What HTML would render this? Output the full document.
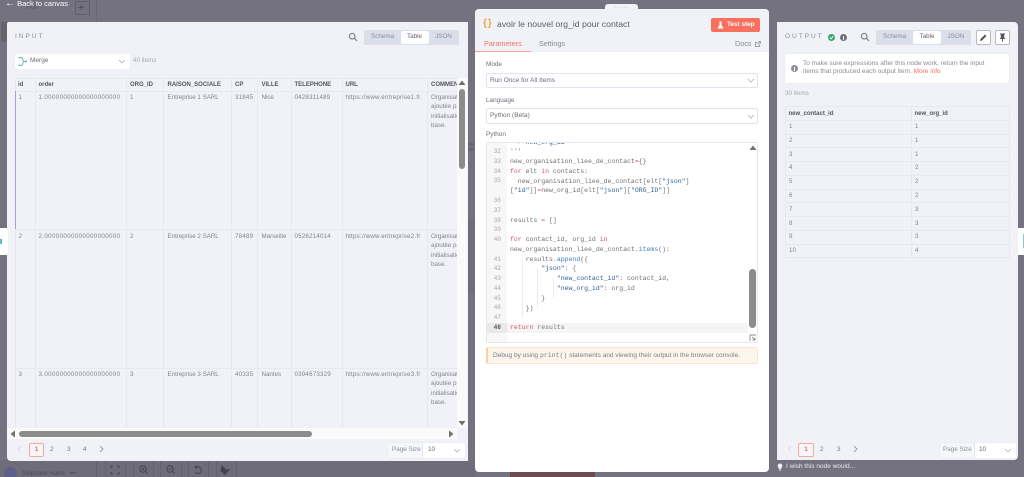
<!DOCTYPE html>
<html lang="fr"><head><meta charset="utf-8"><title>avoir le nouvel org_id pour contact</title>
<style>
*{box-sizing:border-box;margin:0;padding:0}
html,body{width:1024px;height:477px;overflow:hidden;background:#74727f}
body{position:relative;font-family:"Liberation Sans",sans-serif;color:#7b7b85;font-size:6.2px;filter:blur(.35px)}
div,span.a,svg.a{position:absolute}
.t{white-space:nowrap;line-height:10px}
.panel{background:#f0f2f8}
.hd{font-weight:bold;color:#555560;font-size:6px}
.c{color:#84848d;font-size:6.2px}
.d{letter-spacing:.36px}
.e{letter-spacing:.2px}
.m{line-height:9.4px}
.vl{width:1px;background:#e7e9f1}
.hl{height:1px;background:#e7e9f1}
.seg{background:#dbdfe9;border-radius:2px}
.sel{background:#fff;border:1px solid #e2e4ed;border-radius:2px}
.code{font-family:"Liberation Mono",monospace;font-size:6.5px;line-height:9.76px;white-space:pre;color:#6f6f78}
.k{color:#d9536a}.s{color:#2f5f96}.f{color:#3c7fc4}.o{color:#d9536a}
.n{font-family:"Liberation Mono",monospace;font-size:6.2px;color:#a8a8ae;text-align:right;width:12px;line-height:10px}
.btn{top:460px;height:17px;border:1px solid #64626e;border-bottom:none}
</style></head><body>

<!-- dim canvas -->
<div style="left:96px;top:0;width:1px;height:22px;background:#6b6975"></div>
<div class="t" style="left:26px;top:3px;color:#5c5a66;font-size:7px">Nori</div>
<div class="t" style="left:5px;top:-1px;color:#fff;font-size:7.500px;line-height:10px"><span style="font-size:10px;font-weight:bold">&#8592;</span> Back to canvas</div>
<div style="left:75px;top:1px;width:15px;height:14px;border:1px solid #605e6a;border-radius:2px"></div>
<div class="t" style="left:78px;top:2px;color:#4a4854;font-size:11px;line-height:12px">+</div>
<div style="left:1px;top:22px;width:6px;height:20px;background:#66646f"></div>

<!-- bottom bar -->
<div style="left:0;top:460px;width:475px;height:17px;background:#6e6c79"></div>
<div style="left:4px;top:467px;width:13px;height:13px;border-radius:50%;background:#5d5f86"></div>
<div class="t" style="left:22px;top:469px;font-size:6px;color:#4b4a55">Stéphane Hakni &nbsp; •••</div>
<div class="vl" style="left:96px;top:460px;height:17px;background:#64626e"></div>
<div class="btn" style="left:105px;width:21px"></div>
<div class="btn" style="left:133px;width:21px"></div>
<div class="btn" style="left:160px;width:22px"></div>
<div class="btn" style="left:188px;width:21px"></div>
<div class="btn" style="left:216px;width:21px"></div>
<svg class="a" style="left:108px;top:464px" width="125" height="13" viewBox="0 0 125 13" fill="none" stroke="#45434e" stroke-width="1">
<path d="M3 4V2h2M9 2h2v2M3 8v2h2M11 8v2H9"/>
<circle cx="35" cy="5" r="3.2"/><path d="M37.500 7.500l2 2M33.500 5h3M35 3.500v3"/>
<circle cx="62" cy="5" r="3.2"/><path d="M64.500 7.500l2 2M60.500 5h3"/>
<path d="M87 3h3a3.300 3.300 0 1 1-2.800 5M87 3l2-1.500M87 3l2 1.500"/>
<path d="M114 2l4 4 3-.5-4 5-4-4z" fill="#45434e"/>
</svg>
<div style="left:510px;top:472px;width:85px;height:5px;background:#6e4a52"></div>

<!-- gap scraps -->
<div style="left:467px;top:143px;width:8px;height:10px;font-size:5px;line-height:5px;color:#54525d;overflow:hidden">Ma<br>ser</div>
<div style="left:468px;top:220px;width:7px;height:73px;background:#6f6d78"></div>

<!-- INPUT PANEL -->
<div class="panel" style="left:7px;top:22px;width:461px;height:439px;border-radius:2px 0 0 4px;overflow:hidden"></div>

<!-- side handles -->
<div style="left:0;top:228px;width:8px;height:27px;background:#fff;border-radius:0 2px 2px 0"></div>
<div style="left:0;top:239px;width:2px;height:5px;background:#5fbcc8"></div>
<div style="left:1017px;top:228px;width:7px;height:27px;background:#fff;border-radius:2px 0 0 2px"></div>
<div style="left:1023px;top:234px;width:1px;height:14px;background:#8cc4df"></div>

<div class="t" style="left:15px;top:32px;font-size:6.600px;letter-spacing:1.900px;color:#8e8e98">INPUT</div>
<svg class="a" style="left:348px;top:32px" width="10" height="10" viewBox="0 0 10 10" fill="none" stroke="#7c7c86" stroke-width="1.100"><circle cx="4.200" cy="4.200" r="2.800"/><path d="M6.400 6.400L9 9"/></svg>
<div class="seg" style="left:364px;top:30px;width:95px;height:15px"></div>
<div style="left:401px;top:31px;width:28px;height:13px;background:#fff;border-radius:2px"></div>
<div class="t" style="left:371px;top:32px;font-size:6.300px;color:#8a8d98">Schema</div>
<div class="t" style="left:407px;top:32px;font-size:6.300px;color:#666670">Table</div>
<div class="t" style="left:435px;top:32px;font-size:6.300px;color:#8a8d98">JSON</div>

<div style="left:15px;top:54px;width:115px;height:15px;background:#fff;border-radius:2px;box-shadow:0 0 0 .5px #eceef4"></div>
<svg class="a" style="left:18px;top:56px" width="10" height="11" viewBox="0 0 10 11" fill="none" stroke="#5fb8c6" stroke-width="1"><path d="M2.500 1.500h1.500l1.500 4-1.500 4H2.500M5.500 5.500h1.500"/><rect x=".8" y="1" width="1.500" height="1.500" fill="#5fb8c6" stroke="none"/><rect x=".8" y="8.500" width="1.500" height="1.500" fill="#5fb8c6" stroke="none"/><rect x="7" y="4.700" width="2" height="1.600" fill="#5fb8c6" stroke="none"/></svg>
<div class="t" style="left:30px;top:56px;font-size:6.500px;color:#6d6d76">Merge</div>
<svg class="a" style="left:118px;top:59px" width="8" height="5" viewBox="0 0 8 5" fill="none" stroke="#a8a8b0" stroke-width=".7"><path d="M1 1l3 3 3-3"/></svg>
<div class="t" style="left:133px;top:56px;font-size:6.200px;color:#a5a6ae">40 items</div>

<!-- input table -->
<div style="left:15px;top:78px;width:442px;height:350px;overflow:hidden">
  <div class="hl" style="left:0;top:0;width:442px"></div>
  <div class="hl" style="left:0;top:13px;width:442px"></div>
  <div class="hl" style="left:0;top:151px;width:442px"></div>
  <div class="hl" style="left:0;top:290px;width:442px"></div>
  <div class="vl" style="left:0;top:0;height:350px"></div>
  <div class="vl" style="left:20px;top:0;height:350px"></div>
  <div class="vl" style="left:111px;top:0;height:350px"></div>
  <div class="vl" style="left:148px;top:0;height:350px"></div>
  <div class="vl" style="left:216px;top:0;height:350px"></div>
  <div class="vl" style="left:242px;top:0;height:350px"></div>
  <div class="vl" style="left:276px;top:0;height:350px"></div>
  <div class="vl" style="left:327px;top:0;height:350px"></div>
  <div class="vl" style="left:412px;top:0;height:350px"></div>
  <div style="left:0;top:13px;width:1px;height:138px;background:#a79fdc"></div>

  <div class="t hd" style="left:3px;top:2px">id</div>
  <div class="t hd" style="left:23.500px;top:2px">order</div>
  <div class="t hd" style="left:115px;top:2px">ORG_ID</div>
  <div class="t hd" style="left:152.500px;top:2px">RAISON_SOCIALE</div>
  <div class="t hd" style="left:220px;top:2px">CP</div>
  <div class="t hd" style="left:246.500px;top:2px">VILLE</div>
  <div class="t hd" style="left:279.500px;top:2px">TELEPHONE</div>
  <div class="t hd" style="left:330.500px;top:2px">URL</div>
  <div class="t hd" style="left:416px;top:2px">COMMENTAIRE</div>

  <div class="t c" style="left:3.500px;top:15px">1</div>
  <div class="t c d" style="left:23.500px;top:15px">1.00000000000000000000</div>
  <div class="t c" style="left:115px;top:15px">1</div>
  <div class="t c" style="left:152.500px;top:15px">Entreprise 1 SARL</div>
  <div class="t c e" style="left:220px;top:15px">31845</div>
  <div class="t c" style="left:246.500px;top:15px">Nice</div>
  <div class="t c e" style="left:279.500px;top:15px">0428311489</div>
  <div class="t c e" style="left:330.500px;top:15px">https://www.entreprise1.fr</div>
  <div class="t c m" style="left:416px;top:15px">Organisation<br>ajoutée par<br>initialisation<br>base.</div>

  <div class="t c" style="left:3.500px;top:154px">2</div>
  <div class="t c d" style="left:23.500px;top:154px">2.00000000000000000000</div>
  <div class="t c" style="left:115px;top:154px">2</div>
  <div class="t c" style="left:152.500px;top:154px">Entreprise 2 SARL</div>
  <div class="t c e" style="left:220px;top:154px">78489</div>
  <div class="t c" style="left:246.500px;top:154px">Marseille</div>
  <div class="t c e" style="left:279.500px;top:154px">0526214014</div>
  <div class="t c e" style="left:330.500px;top:154px">https://www.entreprise2.fr</div>
  <div class="t c m" style="left:416px;top:154px">Organisation<br>ajoutée par<br>initialisation<br>base.</div>

  <div class="t c" style="left:3.500px;top:292px">3</div>
  <div class="t c d" style="left:23.500px;top:292px">3.00000000000000000000</div>
  <div class="t c" style="left:115px;top:292px">3</div>
  <div class="t c" style="left:152.500px;top:292px">Entreprise 3 SARL</div>
  <div class="t c e" style="left:220px;top:292px">40335</div>
  <div class="t c" style="left:246.500px;top:292px">Nantes</div>
  <div class="t c e" style="left:279.500px;top:292px">0394673329</div>
  <div class="t c e" style="left:330.500px;top:292px">https://www.entreprise3.fr</div>
  <div class="t c m" style="left:416px;top:292px">Organisation<br>ajoutée par<br>initialisation<br>base.</div>
</div>

<!-- input scrollbars -->
<div style="left:457px;top:78px;width:10px;height:350px;background:#fafafa"></div>
<div style="left:459px;top:89px;width:6px;height:80px;background:#8c8c8c;border-radius:3px"></div>
<svg class="a" style="left:458px;top:80px" width="8" height="6"><path d="M4 .5L7.500 5H.5z" fill="#6e6e6e"/></svg>
<svg class="a" style="left:458px;top:420px" width="8" height="6"><path d="M4 5.500L7.500 1H.5z" fill="#6e6e6e"/></svg>
<div style="left:7px;top:428px;width:450px;height:11px;background:#fafafa"></div>
<div style="left:19px;top:431px;width:293px;height:6px;background:#8c8c8c;border-radius:3px"></div>
<svg class="a" style="left:10px;top:430px" width="6" height="8"><path d="M.5 4L5 .5v7z" fill="#6e6e6e"/></svg>
<svg class="a" style="left:448px;top:430px" width="6" height="8"><path d="M5.500 4L1 .5v7z" fill="#6e6e6e"/></svg>

<!-- input pagination -->
<svg class="a" style="left:17px;top:445px" width="5" height="8" fill="none" stroke="#d8d8de" stroke-width=".8"><path d="M4 1L1 4l3 3"/></svg>
<div class="t" style="left:29px;top:443px;width:15px;height:14px;border:1px solid #f8a79c;border-radius:2px;background:#f6f6fb;color:#f0705f;font-size:6.400px;font-weight:bold;text-align:center;line-height:12px">1</div>
<div class="t" style="left:50px;top:445px;font-size:6.400px;color:#777">2</div>
<div class="t" style="left:67px;top:445px;font-size:6.400px;color:#777">3</div>
<div class="t" style="left:83px;top:445px;font-size:6.400px;color:#777">4</div>
<svg class="a" style="left:99px;top:445px" width="5" height="8" fill="none" stroke="#8a8a92" stroke-width=".8"><path d="M1 1l3 3-3 3"/></svg>
<div style="left:388px;top:443px;width:77px;height:15px;background:#fff;border-radius:2px;box-shadow:0 0 0 .5px #e6e8f0"></div>
<div style="left:388px;top:443px;width:35px;height:15px;background:#f6f7fb;border-right:1px solid #e2e4ed;border-radius:2px 0 0 2px"></div>
<div class="t" style="left:392px;top:445px;font-size:6.300px;color:#8d8d96">Page Size</div>
<div class="t" style="left:428px;top:445px;font-size:6.400px;color:#6a6a72">10</div>
<svg class="a" style="left:453px;top:448px" width="8" height="5" fill="none" stroke="#a8a8b0" stroke-width=".7"><path d="M1 1l3 3 3-3"/></svg>

<!-- CENTER PANEL -->
<div style="left:605px;top:4px;width:33px;height:8px;background:#f0f2f8;border-radius:3px 3px 0 0"></div>
<div class="t" style="left:615px;top:5px;font-size:5px;letter-spacing:1px;color:#9a9aa2;line-height:8px">::::::</div>
<div style="left:475px;top:9px;width:294px;height:463px;background:#fff;border-radius:4px"></div>
<div style="left:475px;top:9px;width:294px;height:43px;background:#f0f2f8;border-radius:4px 4px 0 0"></div>
<div class="t" style="left:483px;top:17px;font-size:10px;line-height:14px;color:#f3a338;letter-spacing:-.5px;font-weight:bold">{&#8201;}</div>
<div class="t" style="left:497px;top:19px;font-size:8.700px;color:#5c5c66">avoir le nouvel org_id pour contact</div>
<div style="left:711px;top:18px;width:49px;height:14px;background:#f9705f;border-radius:2px"></div>
<svg class="a" style="left:717px;top:21px" width="7" height="8"><path d="M2.500 .5h2V4L6.500 7.500H.5L2.500 4z" fill="#fff"/></svg>
<div class="t" style="left:727px;top:20px;font-size:6.400px;color:#fff;font-weight:bold">Test step</div>
<div class="t" style="left:484px;top:39px;font-size:7.300px;color:#f9705f">Parameters</div>
<div class="t" style="left:539px;top:39px;font-size:7.200px;color:#8a8a92">Settings</div>
<div class="t" style="left:735px;top:39px;font-size:7.200px;color:#8a8a92">Docs</div>
<svg class="a" style="left:755px;top:41px" width="6" height="6" fill="none" stroke="#8a8a92" stroke-width=".8"><path d="M4.500 3.500V5.500H.5V1.500H2.500M2.500 3.500L5.500 .5M3.500 .5h2v2"/></svg>
<div style="left:475px;top:51px;width:56px;height:1px;background:#f9a094"></div>

<div class="t" style="left:486px;top:60px;font-size:6.400px;color:#6f6f78">Mode</div>
<div class="sel" style="left:486px;top:73px;width:272px;height:15px"></div>
<div class="t" style="left:490px;top:75.500px;font-size:6.500px;color:#6d6d76">Run Once for All Items</div>
<svg class="a" style="left:747px;top:78px" width="8" height="5" fill="none" stroke="#a8a8b0" stroke-width=".7"><path d="M1 1l3 3 3-3"/></svg>
<div class="t" style="left:486px;top:96px;font-size:6.400px;color:#6f6f78">Language</div>
<div class="sel" style="left:486px;top:108px;width:272px;height:16px"></div>
<div class="t" style="left:490px;top:111px;font-size:6.500px;color:#6d6d76">Python (Beta)</div>
<svg class="a" style="left:747px;top:114px" width="8" height="5" fill="none" stroke="#a8a8b0" stroke-width=".7"><path d="M1 1l3 3 3-3"/></svg>
<div class="t" style="left:486px;top:130px;font-size:6.400px;color:#6f6f78">Python</div>

<!-- editor -->
<div style="left:486px;top:142px;width:272px;height:201px;background:#fff;border:1px solid #e6e8f0;border-radius:2px;overflow:hidden">
  <div style="left:0;top:0;width:20px;height:199px;background:#f7f7f8"></div>
  <div style="left:0;top:180px;width:20px;height:9.800px;background:#e9e9ea"></div>
  <div style="left:20px;top:180px;width:241px;height:9.800px;background:#f5f5f5"></div>
  <div class="vl" style="left:35px;top:116px;height:59px;background:#ececf0"></div>
  <div class="vl" style="left:50px;top:126px;height:39px;background:#ececf0"></div>
  <div class="vl" style="left:66px;top:136px;height:19px;background:#ececf0"></div>
  <div class="n" style="left:2px;top:4px">32</div>
  <div class="n" style="left:2px;top:14px">33</div>
  <div class="n" style="left:2px;top:23.500px">34</div>
  <div class="n" style="left:2px;top:33px">35</div>
  <div class="n" style="left:2px;top:53px">36</div>
  <div class="n" style="left:2px;top:62.700px">37</div>
  <div class="n" style="left:2px;top:72.500px">38</div>
  <div class="n" style="left:2px;top:82px">39</div>
  <div class="n" style="left:2px;top:92px">40</div>
  <div class="n" style="left:2px;top:111.500px">41</div>
  <div class="n" style="left:2px;top:121.300px">42</div>
  <div class="n" style="left:2px;top:131px">43</div>
  <div class="n" style="left:2px;top:141px">44</div>
  <div class="n" style="left:2px;top:150.500px">45</div>
  <div class="n" style="left:2px;top:160.300px">46</div>
  <div class="n" style="left:2px;top:170px">47</div>
  <div class="n" style="left:2px;top:180px;color:#5a5a60;font-weight:bold">48</div>
  <div class="code" style="left:23px;top:-5.500px"><span>  &gt; <span class="s">new_org_id</span></span>
'''
new_organisation_liee_de_contact<span class="o">=</span>{}
<span class="k">for</span> elt <span class="k">in</span> contacts:
  new_organisation_liee_de_contact[elt[<span class="s">"json"</span>]
[<span class="s">"id"</span>]]<span class="o">=</span>new_org_id[elt[<span class="s">"json"</span>][<span class="s">"ORG_ID"</span>]]


results <span class="o">=</span> []

<span class="k">for</span> contact_id, org_id <span class="k">in</span>
new_organisation_liee_de_contact.<span class="f">items</span>():
    results.<span class="f">append</span>({
        <span class="s">"json"</span>: {
            <span class="s">"new_contact_id"</span>: contact_id,
            <span class="s">"new_org_id"</span>: org_id
        }
    })

<span class="k">return</span> results</div>
  <div style="left:262px;top:126px;width:7px;height:59px;background:#8c8c8c;border-radius:3.500px"></div>
  <svg style="position:absolute;left:262px;top:2px" width="8" height="6"><path d="M4 .5L7.500 5H.5z" fill="#6e6e6e"/></svg>
</div>
<svg class="a" style="left:749px;top:334px" width="8" height="8" fill="none" stroke="#6a6a72" stroke-width=".7"><path d="M1 1v6M1 1h6M3 3l3 3M6 3.500V6H3.500"/></svg>

<div style="left:486px;top:347px;width:272px;height:17px;background:#fdf6ec;border:1px solid #f6e6cf;border-left:2px solid #f6d6a0;border-radius:2px"></div>
<div class="t" style="left:493px;top:351px;font-size:6.500px;color:#7b7b85">Debug by using <span style="font-family:'Liberation Mono',monospace">print()</span> statements and viewing their output in the browser console.</div>

<!-- OUTPUT PANEL -->
<div class="panel" style="left:777px;top:22px;width:241px;height:438px;border-radius:0 4px 4px 0"></div>
<div class="t" style="left:785px;top:32px;font-size:6.600px;letter-spacing:1.900px;color:#8e8e98">OUTPUT</div>
<div style="left:828px;top:34px;width:7px;height:7px;border-radius:50%;background:#37a76f"></div>
<svg class="a" style="left:829px;top:35px" width="5" height="5" fill="none" stroke="#fff" stroke-width=".9"><path d="M.8 2.500l1.300 1.300L4.200 1.200"/></svg>
<div style="left:839.500px;top:34px;width:7px;height:7px;border-radius:50%;background:#6f6f78"></div>
<div style="left:842.600px;top:35.500px;width:1px;height:4px;background:#f0f2f8"></div>
<svg class="a" style="left:860px;top:32px" width="10" height="10" viewBox="0 0 10 10" fill="none" stroke="#7c7c86" stroke-width="1.100"><circle cx="4.200" cy="4.200" r="2.800"/><path d="M6.400 6.400L9 9"/></svg>
<div class="seg" style="left:876px;top:30px;width:95px;height:15px"></div>
<div style="left:913px;top:31px;width:28px;height:13px;background:#fff;border-radius:2px"></div>
<div class="t" style="left:883px;top:32px;font-size:6.300px;color:#8a8d98">Schema</div>
<div class="t" style="left:919.500px;top:32px;font-size:6.300px;color:#666670">Table</div>
<div class="t" style="left:947.500px;top:32px;font-size:6.300px;color:#8a8d98">JSON</div>
<div style="left:976px;top:30px;width:15px;height:15px;background:#fff;border:1px solid #b9bac2;border-radius:2px"></div>
<svg class="a" style="left:979px;top:33px" width="9" height="9"><path d="M1 8l.5-2L6 1.500 7.500 3 3 7.500z" fill="#55555e"/></svg>
<div style="left:995px;top:30px;width:15px;height:15px;background:#fff;border:1px solid #b9bac2;border-radius:2px"></div>
<svg class="a" style="left:998px;top:33px" width="9" height="9"><path d="M2 .5h5v1H6.200v3L7.500 6h-2.500v2.800H4V6H1.500l1.300-1.500v-3H2z" fill="#55555e"/></svg>

<div style="left:785px;top:54px;width:224px;height:29px;background:#fff;border-radius:2px;box-shadow:0 0 0 .5px #e6e8f0"></div>
<div style="left:791px;top:65px;width:7px;height:7px;border-radius:50%;background:#8f8f98"></div>
<div style="left:794px;top:66.500px;width:1px;height:4px;background:#fff"></div>
<div class="t" style="left:803px;top:60px;font-size:6.500px;line-height:8px;color:#8a8a93">To make sure expressions after this node work, return the input<br>items that produced each output item. <span style="color:#f9705f">More info</span></div>
<div class="t" style="left:785px;top:88.500px;font-size:6.300px;color:#a5a6ae">30 items</div>

<!-- output table -->
<div style="left:785px;top:106px;width:225px;height:151.500px;border:1px solid #e7e9f1">
  <div class="vl" style="left:125px;top:0;height:150px"></div>
  <div class="hl" style="left:0;top:12.500px;width:223px"></div>
  <div class="hl" style="left:0;top:26.500px;width:223px"></div>
  <div class="hl" style="left:0;top:40.300px;width:223px"></div>
  <div class="hl" style="left:0;top:54.200px;width:223px"></div>
  <div class="hl" style="left:0;top:68.100px;width:223px"></div>
  <div class="hl" style="left:0;top:81.500px;width:223px"></div>
  <div class="hl" style="left:0;top:95.300px;width:223px"></div>
  <div class="hl" style="left:0;top:109.200px;width:223px"></div>
  <div class="hl" style="left:0;top:123px;width:223px"></div>
  <div class="hl" style="left:0;top:137px;width:223px"></div>
  <div class="t hd" style="left:2.500px;top:1.500px">new_contact_id</div>
  <div class="t hd" style="left:128.500px;top:1.500px">new_org_id</div>
  <div class="t c" style="left:3px;top:15px">1</div><div class="t c" style="left:129px;top:15px">1</div>
  <div class="t c" style="left:3px;top:28.800px">2</div><div class="t c" style="left:129px;top:28.800px">1</div>
  <div class="t c" style="left:3px;top:42.700px">3</div><div class="t c" style="left:129px;top:42.700px">1</div>
  <div class="t c" style="left:3px;top:56px">4</div><div class="t c" style="left:129px;top:56px">2</div>
  <div class="t c" style="left:3px;top:70px">5</div><div class="t c" style="left:129px;top:70px">2</div>
  <div class="t c" style="left:3px;top:84px">6</div><div class="t c" style="left:129px;top:84px">2</div>
  <div class="t c" style="left:3px;top:97.700px">7</div><div class="t c" style="left:129px;top:97.700px">3</div>
  <div class="t c" style="left:3px;top:111.500px">8</div><div class="t c" style="left:129px;top:111.500px">3</div>
  <div class="t c" style="left:3px;top:125.200px">9</div><div class="t c" style="left:129px;top:125.200px">3</div>
  <div class="t c" style="left:3px;top:139px">10</div><div class="t c" style="left:129px;top:139px">4</div>
</div>

<!-- output pagination -->
<svg class="a" style="left:787px;top:445px" width="5" height="8" fill="none" stroke="#d8d8de" stroke-width=".8"><path d="M4 1L1 4l3 3"/></svg>
<div class="t" style="left:798px;top:443px;width:16px;height:14px;border:1px solid #f8a79c;border-radius:2px;background:#f6f6fb;color:#f0705f;font-size:6.400px;font-weight:bold;text-align:center;line-height:12px">1</div>
<div class="t" style="left:820px;top:445px;font-size:6.400px;color:#777">2</div>
<div class="t" style="left:837px;top:445px;font-size:6.400px;color:#777">3</div>
<svg class="a" style="left:853px;top:445px" width="5" height="8" fill="none" stroke="#8a8a92" stroke-width=".8"><path d="M1 1l3 3-3 3"/></svg>
<div style="left:940px;top:443px;width:75.500px;height:15px;background:#fff;border-radius:2px;box-shadow:0 0 0 .5px #e6e8f0"></div>
<div style="left:940px;top:443px;width:35px;height:15px;background:#f6f7fb;border-right:1px solid #e2e4ed;border-radius:2px 0 0 2px"></div>
<div class="t" style="left:943px;top:445px;font-size:6.300px;color:#8d8d96">Page Size</div>
<div class="t" style="left:979px;top:445px;font-size:6.400px;color:#6a6a72">10</div>
<svg class="a" style="left:1004px;top:448px" width="8" height="5" fill="none" stroke="#a8a8b0" stroke-width=".7"><path d="M1 1l3 3 3-3"/></svg>

<svg class="a" style="left:777px;top:463px" width="6" height="8"><path d="M3 .5a2.300 2.300 0 0 1 1.300 4.200V6H1.700V4.700A2.300 2.300 0 0 1 3 .5zM2 6.500h2v1H2z" fill="#f2f2f5"/></svg>
<div class="t" style="left:786px;top:462px;font-size:6.500px;color:#e9e9ee">I wish this node would...</div>
</body></html>
